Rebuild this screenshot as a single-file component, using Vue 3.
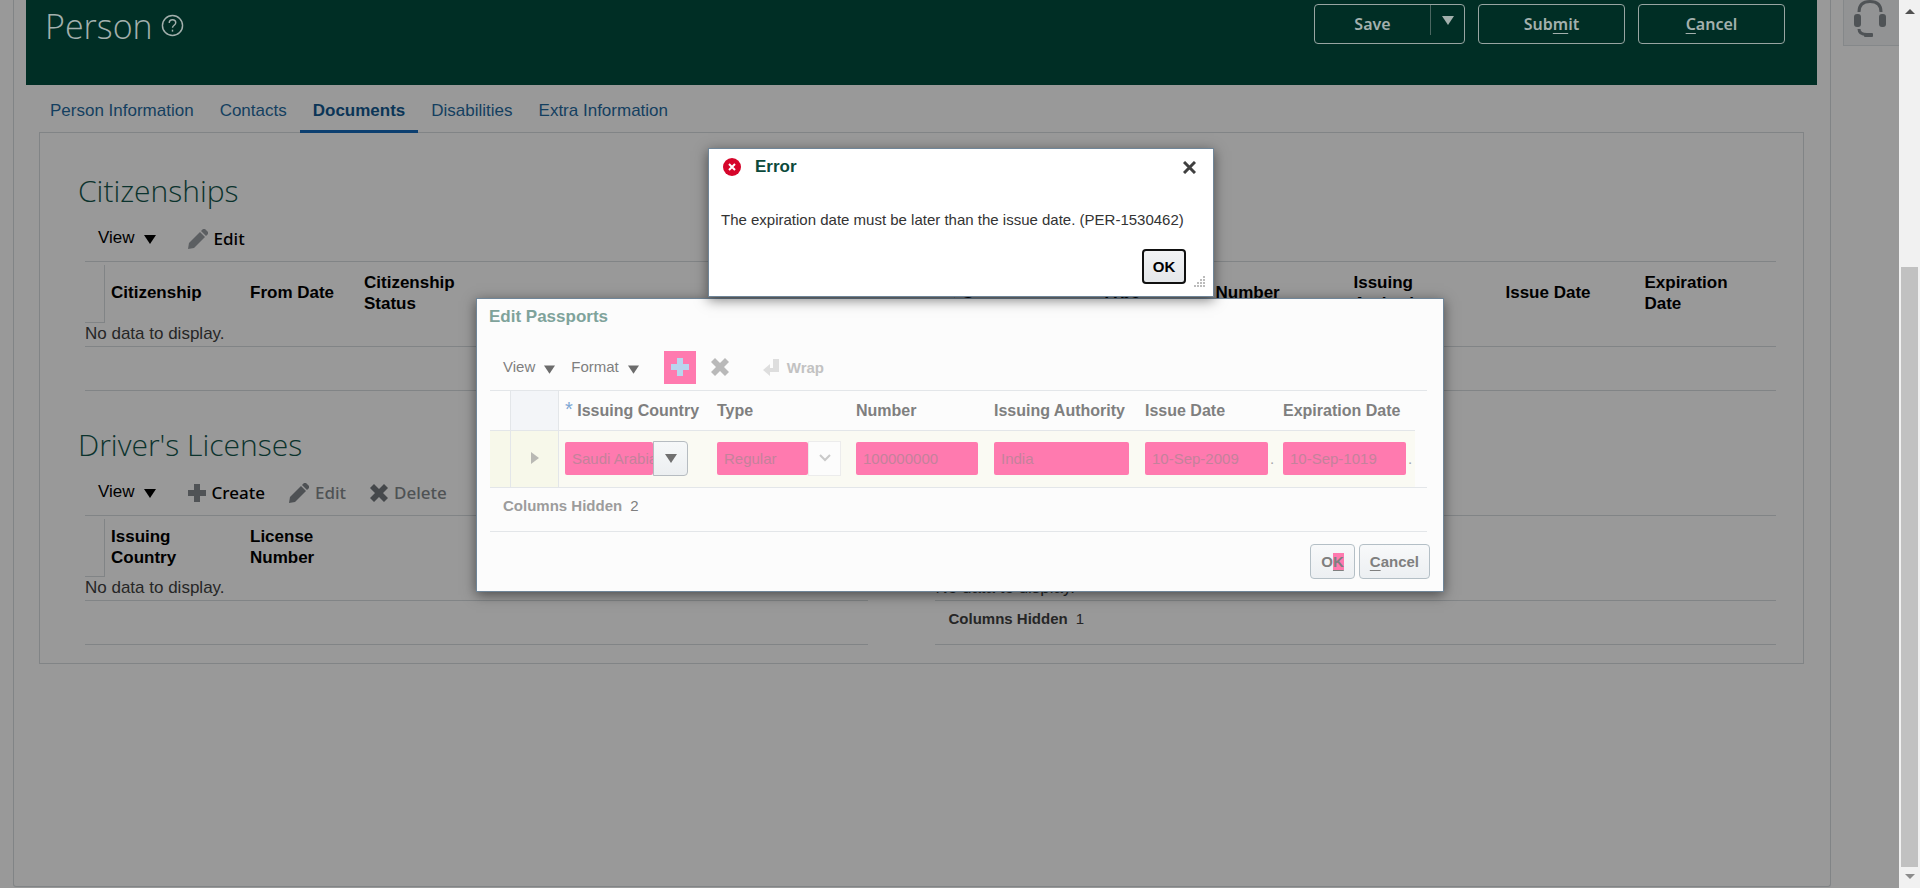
<script setup>
import { ref } from 'vue'

const tabs = ['Person Information', 'Contacts', 'Documents', 'Disabilities', 'Extra Information']
const activeTab = ref('Documents')

const country = ref('Saudi Arabia')
const type = ref('Regular')
const number = ref('100000000')
const authority = ref('India')
const issueDate = ref('10-Sep-2009')
const expirationDate = ref('10-Sep-1019')
</script>

<template>
  <div class="screen">
    <main class="page">
      <header class="banner">
        <h1>Person</h1>
        <button class="help" aria-label="Help">
          <svg width="23" height="23" viewBox="0 0 24 24" fill="none" stroke="currentColor" stroke-width="1.5">
            <circle cx="12" cy="12" r="10.5" />
            <path d="M8.6 9.4C8.6 7.2 10 6 12 6s3.4 1.2 3.4 3c0 2.600-3.400 2.800-3.400 5.400" />
            <path d="M12 16.400v2" />
          </svg>
        </button>
        <div class="actions">
          <div class="split">
            <button class="split-main">Save</button>
            <button class="split-more" aria-label="More save options">
              <svg width="12" height="9" viewBox="0 0 12 9"><path d="M0 0h12L6 9z" fill="currentColor" /></svg>
            </button>
          </div>
          <button class="action">Sub<u>m</u>it</button>
          <button class="action"><u>C</u>ancel</button>
        </div>
      </header>

      <nav class="tabs">
        <a v-for="t in tabs" :key="t" href="#" :class="{ active: t === activeTab }" @click.prevent="activeTab = t">{{ t }}</a>
      </nav>

      <div class="panel">
        <section class="block">
          <h2>Citizenships</h2>
          <div class="toolbar">
            <button class="view">View <svg width="12" height="9" viewBox="0 0 12 9"><path d="M0 0h12L6 9z" fill="currentColor" /></svg></button>
            <button class="tool">
              <svg width="20" height="20" viewBox="0 0 20 20" fill="#5c5f62"><path d="M0 20l1-6L12 3l5 5L6 19z" /><path d="M13 2l2-2h2l3 3v2l-2 2z" /></svg>
              Edit
            </button>
          </div>
          <table class="grid">
            <colgroup><col class="c-mark" /><col class="c-139" /><col class="c-114" /><col class="c-110" /><col /></colgroup>
            <thead><tr><th class="mark"><i></i></th><th>Citizenship</th><th>From Date</th><th>Citizenship Status</th><th></th></tr></thead>
            <tbody><tr><td colspan="5">No data to display.</td></tr></tbody>
          </table>
          <div class="foot"></div>
        </section>

        <section class="block">
          <div class="top-space"></div>
          <table class="grid">
            <colgroup><col class="c-mark" /><col class="c-140" /><col class="c-114" /><col class="c-138" /><col class="c-152" /><col class="c-139" /><col /></colgroup>
            <thead><tr><th class="mark"><i></i></th><th>Issuing<br />Country</th><th>Type</th><th>Number</th><th>Issuing<br />Authority</th><th>Issue Date</th><th>Expiration<br />Date</th></tr></thead>
            <tbody><tr><td colspan="7">No data to display.</td></tr></tbody>
          </table>
          <div class="foot"></div>
        </section>

        <section class="block">
          <h2>Driver's Licenses</h2>
          <div class="toolbar">
            <button class="view">View <svg width="12" height="9" viewBox="0 0 12 9"><path d="M0 0h12L6 9z" fill="currentColor" /></svg></button>
            <button class="tool">
              <svg width="18" height="18" viewBox="0 0 18 18" fill="#505356"><path d="M6 0h6v6h6v6h-6v6H6v-6H0V6h6z" /></svg>
              Create
            </button>
            <button class="tool" disabled>
              <svg width="20" height="20" viewBox="0 0 20 20" fill="#4e5154"><path d="M0 20l1-6L12 3l5 5L6 19z" /><path d="M13 2l2-2h2l3 3v2l-2 2z" /></svg>
              Edit
            </button>
            <button class="tool" disabled>
              <svg width="18" height="18" viewBox="0 0 18 18" fill="#45484b"><path d="M4 0l5 5 5-5 4 4-5 5 5 5-4 4-5-5-5 5-4-4 5-5-5-5z" /></svg>
              Delete
            </button>
          </div>
          <table class="grid">
            <colgroup><col class="c-mark" /><col class="c-139" /><col class="c-114" /><col /></colgroup>
            <thead><tr><th class="mark"><i></i></th><th>Issuing<br />Country</th><th>License<br />Number</th><th></th></tr></thead>
            <tbody><tr><td colspan="4">No data to display.</td></tr></tbody>
          </table>
          <div class="foot"></div>
        </section>

        <section class="block">
          <div class="top-space"></div>
          <table class="grid">
            <thead><tr><th></th></tr></thead>
            <tbody><tr><td>No data to display.</td></tr></tbody>
          </table>
          <div class="foot"><b>Columns Hidden</b><span>1</span></div>
        </section>
      </div>
    </main>

    <aside class="side">
      <button class="headset" aria-label="Support">
        <svg width="34" height="38" viewBox="0 0 34 38" fill="none" stroke="#4f5356">
          <path d="M6 12C6 5 10 1.500 17 1.500S28 5 28 12" stroke-width="3" />
          <rect x="1" y="14" width="7" height="13" rx="3" fill="#4f5356" stroke="none" />
          <rect x="26" y="14" width="7" height="13" rx="3" fill="#4f5356" stroke="none" />
          <path d="M6 29c0 4 3 5.500 8 5.500" stroke-width="3" />
          <rect x="11" y="33" width="9" height="4" rx="1" fill="#4f5356" stroke="none" />
        </svg>
      </button>
    </aside>

    <div class="scrollbar">
      <svg width="10" height="5" viewBox="0 0 10 5"><path d="M0 5h10L5 0z" fill="#505050" /></svg>
      <div class="track"><div class="thumb"></div></div>
      <svg width="10" height="5" viewBox="0 0 10 5"><path d="M0 0h10L5 5z" fill="#8c8c8c" /></svg>
    </div>

    <div class="dialog edit" role="dialog" aria-labelledby="edit-title">
      <h3 id="edit-title">Edit Passports</h3>
      <div class="edit-bar">
        <button class="menu">View <svg width="11" height="9" viewBox="0 0 12 9"><path d="M0 0h12L6 9z" fill="currentColor" /></svg></button>
        <button class="menu">Format <svg width="11" height="9" viewBox="0 0 12 9"><path d="M0 0h12L6 9z" fill="currentColor" /></svg></button>
        <button class="add" aria-label="Add row">
          <svg width="18" height="18" viewBox="0 0 18 18" fill="#b9d6ee"><path d="M6 0h6v6h6v6h-6v6H6v-6H0V6h6z" /></svg>
        </button>
        <button class="remove" aria-label="Delete row">
          <svg width="18" height="18" viewBox="0 0 18 18" fill="#b9b9b9"><path d="M4 0l5 5 5-5 4 4-5 5 5 5-4 4-5-5-5 5-4-4 5-5-5-5z" /></svg>
        </button>
        <button class="wrap" disabled>
          <svg width="16" height="17" viewBox="0 0 16 17" fill="#dedede"><path d="M10 0h6v13H7v4L0 11l7-6v4h3z" /></svg>
          Wrap
        </button>
      </div>

      <div class="edit-table">
        <table>
          <colgroup><col class="e-21" /><col class="e-48" /><col class="e-152" /><col class="e-139" /><col class="e-138" /><col class="e-151" /><col class="e-138" /><col /></colgroup>
          <thead>
            <tr>
              <th class="lead"></th>
              <th class="lead tint"></th>
              <th><span class="star">*</span> Issuing Country</th>
              <th>Type</th>
              <th>Number</th>
              <th>Issuing Authority</th>
              <th>Issue Date</th>
              <th>Expiration Date</th>
            </tr>
          </thead>
          <tbody>
            <tr>
              <td class="lead"></td>
              <td class="lead">
                <button class="expand" aria-label="Expand row"><svg width="8" height="12" viewBox="0 0 8 12"><path d="M0 0l8 6-8 6z" fill="#b9b9b4" /></svg></button>
              </td>
              <td>
                <div class="combo">
                  <input v-model="country" class="field" aria-label="Issuing Country" />
                  <button class="drop" aria-label="Choose issuing country"><svg width="12" height="9" viewBox="0 0 12 9"><path d="M0 0h12L6 9z" fill="#707070" /></svg></button>
                </div>
              </td>
              <td>
                <div class="choice">
                  <select v-model="type" class="field" aria-label="Type"><option>Regular</option></select>
                  <span class="chev"><svg width="12" height="8" viewBox="0 0 12 8" fill="none" stroke="#c9c9c9" stroke-width="2"><path d="M1 1l5 5 5-5" /></svg></span>
                </div>
              </td>
              <td><input v-model="number" class="field w-122" aria-label="Number" /></td>
              <td><input v-model="authority" class="field w-135" aria-label="Issuing Authority" /></td>
              <td><div class="date"><input v-model="issueDate" class="field" aria-label="Issue Date" /><span>.</span></div></td>
              <td><div class="date"><input v-model="expirationDate" class="field" aria-label="Expiration Date" /><span>.</span></div></td>
            </tr>
          </tbody>
        </table>
      </div>
      <div class="edit-foot"><b>Columns Hidden</b><span>2</span></div>
      <div class="edit-actions">
        <button class="btn">O<u class="hit">K</u></button>
        <button class="btn"><u>C</u>ancel</button>
      </div>
    </div>

    <div class="dialog error" role="alertdialog" aria-labelledby="error-title">
      <div class="error-head">
        <svg width="18" height="18" viewBox="0 0 18 18"><circle cx="9" cy="9" r="9" fill="#d6062b" /><path d="M6 6l6 6M12 6l-6 6" stroke="#fff" stroke-width="2" /></svg>
        <h3 id="error-title">Error</h3>
        <button class="close" aria-label="Close"><svg width="13" height="13" viewBox="0 0 13 13" stroke="#404040" stroke-width="3"><path d="M1 1l11 11M12 1L1 12" /></svg></button>
      </div>
      <p>The expiration date must be later than the issue date. (PER-1530462)</p>
      <div class="error-actions">
        <button class="btn focus">OK</button>
        <svg class="grip" width="12" height="12" viewBox="0 0 12 12" fill="#bcbcbc">
          <path d="M10 0h2v2h-2zM10 3h2v2h-2zM7 3h2v2H7zM10 6h2v2h-2zM7 6h2v2H7zM4 6h2v2H4zM10 9h2v2h-2zM7 9h2v2H7zM4 9h2v2H4zM1 9h2v2H1z" />
        </svg>
      </div>
    </div>
  </div>
</template>

<style>
html, body { margin: 0; background: #999; overflow: hidden; }
</style>

<style scoped>
* { box-sizing: border-box; }
button { font: inherit; color: inherit; background: none; border: 0; padding: 0; margin: 0; }
h1, h2, h3, p { margin: 0; font-weight: normal; }
.screen {
  position: relative;
  display: flex;
  min-height: 100vh;
  background: #999;
  color: #000;
  font-family: "Liberation Sans", Arial, sans-serif;
  font-size: 17px;
  line-height: 21px;
}
.page {
  flex: 1;
  margin: 0 0 1px 13px;
  padding: 0 13px 0 12px;
  border: 1px solid #818486;
  border-top: 0;
  border-radius: 0 0 3px 3px;
}

.banner {
  display: flex;
  align-items: flex-start;
  height: 85px;
  padding: 4px 32px 0 19px;
  background: #002e25;
  color: #a3b0ad;
}
.banner h1 { font: 300 34px/44px "Open Sans", "Noto Sans", sans-serif; }
.help { display: flex; margin: 10px 0 0 8px; }
.actions { display: flex; gap: 13px; margin-left: auto; font: 600 16px/38px "Noto Sans", sans-serif; }
.action, .split { height: 40px; border: 1px solid #98a5a2; border-radius: 4px; }
.action { width: 147px; }
.split { display: flex; width: 151px; }
.split-main { flex: 1; }
.split-more { display: flex; justify-content: center; width: 34px; height: 30px; padding-top: 11px; border-left: 1px solid #4b6761; }
u { text-decoration: underline; text-underline-offset: 3px; text-decoration-thickness: 1px; }

.tabs { display: flex; margin-left: 11px; }
.tabs a {
  padding: 14px 13px 7px;
  border-bottom: 3px solid transparent;
  color: #143f60;
  line-height: 24px;
  text-decoration: none;
}
.tabs a.active { border-color: #0c3f70; font-weight: bold; color: #0b3557; }

.panel {
  display: grid;
  grid-template-columns: 783fr 840fr;
  column-gap: 67px;
  row-gap: 28px;
  margin: -1px 13px 0 13px;
  padding: 32px 27px 18px 45px;
  border: 1px solid #818486;
}
.block h2 { margin-left: -7px; color: #0b332d; font: 300 30px/52px "Open Sans", "Noto Sans", sans-serif; }
.toolbar { display: flex; align-items: center; gap: 24px; height: 44px; padding-left: 13px; }
.top-space { height: 96px; }
.view { display: flex; align-items: center; gap: 9px; margin-right: 8px; padding-bottom: 4px; }
.view svg { margin-top: 4px; }
.tool { display: flex; align-items: center; gap: 6px; font: 500 17px/24px "Noto Sans", sans-serif; }
.tool:disabled { color: #4f5254; }
.grid { width: 100%; table-layout: fixed; border-collapse: separate; border-spacing: 0; border-top: 1px solid #818486; }
.grid th { height: 61px; padding: 0 0 0 6px; text-align: left; vertical-align: middle; }
.grid .mark { padding: 3px 0 0; }
.mark i { display: block; height: 58px; border: 1px solid #818486; border-width: 0 1px 1px 0; }
.grid td { height: 24px; padding: 0 0 2px; border-bottom: 1px solid #818486; color: #262626; }
.c-mark { width: 20px; }
.c-110 { width: 110px; }
.c-114 { width: 114px; }
.c-138 { width: 138px; }
.c-139 { width: 139px; }
.c-140 { width: 140px; }
.c-152 { width: 152px; }
.foot { display: flex; gap: 8px; height: 44px; padding: 7px 13px; border-bottom: 1px solid #818486; color: #262626; font-size: 15px; }

.side { width: 68px; padding-left: 12px; }
.headset { display: flex; justify-content: center; width: 100%; height: 46px; padding: 0 3px 0 0; border: 1px solid #85888a; border-width: 0 0 1px 1px; background: #929394; }
.scrollbar { display: flex; flex-direction: column; align-items: center; width: 21px; padding: 9px 0 9px; background: #f1f1f1; }
.track { flex: 1; display: flex; align-items: flex-end; padding: 8px 0 7px; }
.thumb { width: 17px; height: 71%; background: #c1c1c1; }

.dialog { position: absolute; border: 1px solid #6f8598; box-shadow: 0 3px 12px rgba(0, 0, 0, 0.5); }
.edit { top: 298px; left: calc(50% - 484px); width: 968px; padding: 6px 13px 12px 13px; background: #fcfcfc; color: #7f7f7f; font-size: 15px; }
.edit h3 { margin-left: -1px; color: #7fa39b; font-size: 17px; font-weight: bold; line-height: 24px; }
.edit-bar { display: flex; align-items: center; height: 61px; padding: 15px 0 0 13px; }
.menu { display: flex; align-items: center; gap: 9px; margin-right: 16px; padding-bottom: 2px; }
.menu svg { margin-top: 6px; color: #6c6c6c; }
.add { display: flex; align-items: center; justify-content: center; width: 32px; height: 33px; margin-left: 9px; background: #ff7aaf; }
.remove { display: flex; margin: 0 34px 0 15px; }
.wrap { display: flex; align-items: center; gap: 8px; color: #c2c2c2; font-weight: bold; }
.edit-table { border: 1px solid #e3e6e9; border-width: 1px 0; margin-right: 3px; }
.edit table { width: 925px; table-layout: fixed; border-collapse: separate; border-spacing: 0; }
.edit th { height: 40px; padding: 0 0 0 6px; border-bottom: 1px solid #e3e6e9; font-size: 16px; text-align: left; white-space: nowrap; }
.edit td { height: 56px; padding: 0 0 2px 6px; background: #fafaf3; }
.edit .lead { padding: 0 0 2px; border-right: 1px solid #e3e6e9; }
.edit td.lead { background: #f7f8ea; }
.edit .tint { background: #f3f5f8; }
.star { color: #7da7d4; font-size: 20px; font-weight: normal; line-height: 16px; }
.e-21 { width: 21px; }
.e-48 { width: 48px; }
.e-138 { width: 138px; }
.e-139 { width: 139px; }
.e-151 { width: 151px; }
.e-152 { width: 152px; }
.expand { display: flex; margin-left: 20px; }
.field {
  display: block;
  height: 33px;
  margin: 0;
  padding: 0 7px;
  border: 0;
  border-radius: 2px;
  background: #ff7aaf;
  color: #c4829b;
  font: 15px/33px "Liberation Sans", Arial, sans-serif;
  appearance: none;
}
.w-122 { width: 122px; }
.w-135 { width: 135px; }
.combo, .choice, .date { display: flex; align-items: center; }
.combo .field { width: 88px; padding-right: 0; }
.drop { display: flex; align-items: center; justify-content: center; width: 35px; height: 35px; border: 1px solid #b6bcc1; border-radius: 0 4px 4px 0; background: linear-gradient(#f6f8f9, #eceff1); }
.choice .field { width: 91px; }
.chev { display: flex; align-items: center; justify-content: center; width: 33px; height: 35px; border: 1px solid #ececec; background: #fcfcfc; }
.date { gap: 2px; color: #a5a5a5; }
.date .field { width: 123px; }
.edit-foot { display: flex; gap: 8px; height: 44px; margin-right: 3px; padding: 7px 13px; border-bottom: 1px solid #e3e6e9; }
.edit-foot b { color: #9c9c9c; }
.edit-actions { display: flex; justify-content: flex-end; gap: 4px; padding-top: 12px; }
.btn { height: 35px; padding: 0 10px; border: 1px solid #b4bfc6; border-radius: 4px; background: linear-gradient(#f8f9fa, #eceff2); font-size: 15px; font-weight: bold; line-height: 20px; }
.hit { background: #ff7aaf; }

.error { top: 148px; left: calc(50% - 252px); width: 506px; padding: 7px 8px 12px 12px; background: #fff; color: #333; font-size: 15px; }
.error-head { display: flex; align-items: center; padding: 0 9px 0 2px; }
.error-head h3 { margin-left: 14px; color: #0b4a3b; font-size: 17px; font-weight: bold; }
.close { display: flex; margin: 2px 0 0 auto; }
.error p { margin-top: 32px; }
.error-actions { display: flex; justify-content: flex-end; gap: 7px; margin-top: 19px; }
.focus { width: 44px; padding: 0; border: 2px solid #111; background: linear-gradient(#f2f3f5, #e4e7ea); color: #000; }
.grip { align-self: flex-end; margin-bottom: -4px; }
</style>
